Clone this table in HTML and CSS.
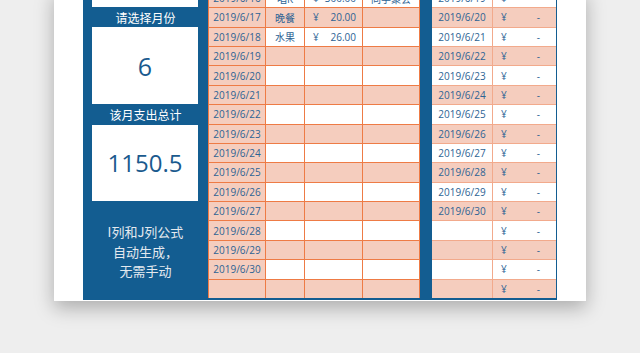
FILE: index.html
```html
<!DOCTYPE html>
<html lang="zh-CN">
<head>
<meta charset="utf-8">
<title>月度支出表</title>
<link rel="stylesheet" href="styles.css">
</head>
<body>
<div class="page">
  <div class="paper">
    <div class="frame">
      <aside class="side">
        <div class="box box-top"></div>
        <div class="label">请选择月份</div>
        <div class="box box-month">6</div>
        <div class="label">该月支出总计</div>
        <div class="box box-total">1150.5</div>
        <div class="note">I列和J列公式<br>自动生成，<br>无需手动</div>
      </aside>

      <div class="ledger">
        <div class="c s">2019/6/16</div><div class="c">唱K</div><div class="c amt"><span>¥</span><span>300.00</span></div><div class="c">同学聚会</div>
        <div class="c s">2019/6/17</div><div class="c s">晚餐</div><div class="c s amt"><span>¥</span><span>20.00</span></div><div class="c s"></div>
        <div class="c s">2019/6/18</div><div class="c">水果</div><div class="c amt"><span>¥</span><span>26.00</span></div><div class="c"></div>
        <div class="c s">2019/6/19</div><div class="c s"></div><div class="c s"></div><div class="c s"></div>
        <div class="c s">2019/6/20</div><div class="c"></div><div class="c"></div><div class="c"></div>
        <div class="c s">2019/6/21</div><div class="c s"></div><div class="c s"></div><div class="c s"></div>
        <div class="c s">2019/6/22</div><div class="c"></div><div class="c"></div><div class="c"></div>
        <div class="c s">2019/6/23</div><div class="c s"></div><div class="c s"></div><div class="c s"></div>
        <div class="c s">2019/6/24</div><div class="c"></div><div class="c"></div><div class="c"></div>
        <div class="c s">2019/6/25</div><div class="c s"></div><div class="c s"></div><div class="c s"></div>
        <div class="c s">2019/6/26</div><div class="c"></div><div class="c"></div><div class="c"></div>
        <div class="c s">2019/6/27</div><div class="c s"></div><div class="c s"></div><div class="c s"></div>
        <div class="c s">2019/6/28</div><div class="c"></div><div class="c"></div><div class="c"></div>
        <div class="c s">2019/6/29</div><div class="c s"></div><div class="c s"></div><div class="c s"></div>
        <div class="c s">2019/6/30</div><div class="c"></div><div class="c"></div><div class="c"></div>
        <div class="c s"></div><div class="c s"></div><div class="c s"></div><div class="c s"></div>
      </div>

      <div class="gap"></div>

      <div class="daily">
        <div class="d">2019/6/19</div><div class="d amt"><span>¥</span><span>-</span></div>
        <div class="d s">2019/6/20</div><div class="d s amt"><span>¥</span><span>-</span></div>
        <div class="d">2019/6/21</div><div class="d amt"><span>¥</span><span>-</span></div>
        <div class="d s">2019/6/22</div><div class="d s amt"><span>¥</span><span>-</span></div>
        <div class="d">2019/6/23</div><div class="d amt"><span>¥</span><span>-</span></div>
        <div class="d s">2019/6/24</div><div class="d s amt"><span>¥</span><span>-</span></div>
        <div class="d">2019/6/25</div><div class="d amt"><span>¥</span><span>-</span></div>
        <div class="d s">2019/6/26</div><div class="d s amt"><span>¥</span><span>-</span></div>
        <div class="d">2019/6/27</div><div class="d amt"><span>¥</span><span>-</span></div>
        <div class="d s">2019/6/28</div><div class="d s amt"><span>¥</span><span>-</span></div>
        <div class="d">2019/6/29</div><div class="d amt"><span>¥</span><span>-</span></div>
        <div class="d s">2019/6/30</div><div class="d s amt"><span>¥</span><span>-</span></div>
        <div class="d"></div><div class="d amt"><span>¥</span><span>-</span></div>
        <div class="d s"></div><div class="d s amt"><span>¥</span><span>-</span></div>
        <div class="d"></div><div class="d amt"><span>¥</span><span>-</span></div>
        <div class="d s"></div><div class="d s amt"><span>¥</span><span>-</span></div>
      </div>
    </div>
  </div>
</div>
</body>
</html>
```

FILE: styles.css
```css
* { box-sizing: border-box; margin: 0; padding: 0; }
html, body { height: 100%; }
body {
  background: #eeeeee;
  font-family: "Open Sans", "Noto Sans CJK SC", sans-serif;
  overflow: hidden;
}
.page { padding-left: 54px; padding-top: 0.1px; }
.paper {
  width: 532px;
  margin-top: -11.18px;
  background: #ffffff;
  padding: 0 29px 1px;
  box-shadow: 0 7px 18px rgba(0, 0, 0, 0.28);
}
.frame {
  display: grid;
  grid-template-columns: 125px 212px 12px 124px;
  align-items: start;
  background: #135d91;
  padding: 0 1px 1px 0;
}

/* sidebar */
.side {
  display: grid;
  grid-template-rows: repeat(16, 19.38px);
}
.box {
  background: #ffffff;
  margin: 0 10px 1px 9px;
  display: flex;
  align-items: center;
  justify-content: center;
  color: #1a5a8e;
  font-size: 25px;
}
.box-top { grid-row: 1; }
.box-month { grid-row: 3 / span 4; margin-top: -0.5px; }
.box-total { grid-row: 8 / span 4; font-size: 24px; }
.label {
  display: flex;
  align-items: center;
  justify-content: center;
  color: #ffffff;
  font-family: "Noto Sans CJK SC", sans-serif;
  font-size: 12px;
}
.note {
  grid-row: 12 / span 5;
  display: flex;
  align-items: center;
  justify-content: center;
  text-align: center;
  color: #e3e9ef;
  font-family: "Noto Sans CJK SC", sans-serif;
  font-size: 13px;
  line-height: 19.4px;
  padding-top: 2px;
}

/* middle ledger */
.ledger {
  display: grid;
  grid-template-columns: 56px 38px 57px 56px;
  grid-auto-rows: 18.38px;
  gap: 1px;
  padding: 0 1px;
  background: #ee7b45;
}
.c, .d {
  display: flex;
  align-items: center;
  justify-content: center;
  background: #ffffff;
  color: #2d6394;
  font-size: 10px;
  white-space: nowrap;
}
.c.s, .d.s { background: #f5cdbe; }
.c.amt { justify-content: space-between; padding: 0 6px 0 8px; }

.gap { height: 100%; }

/* right daily table */
.daily {
  display: grid;
  grid-template-columns: 60px 63px;
  grid-auto-rows: 18.38px;
  gap: 1px;
  background: #f2aa8c;
}
.d.amt { justify-content: space-between; padding: 0 16px 0 8px; }
```
